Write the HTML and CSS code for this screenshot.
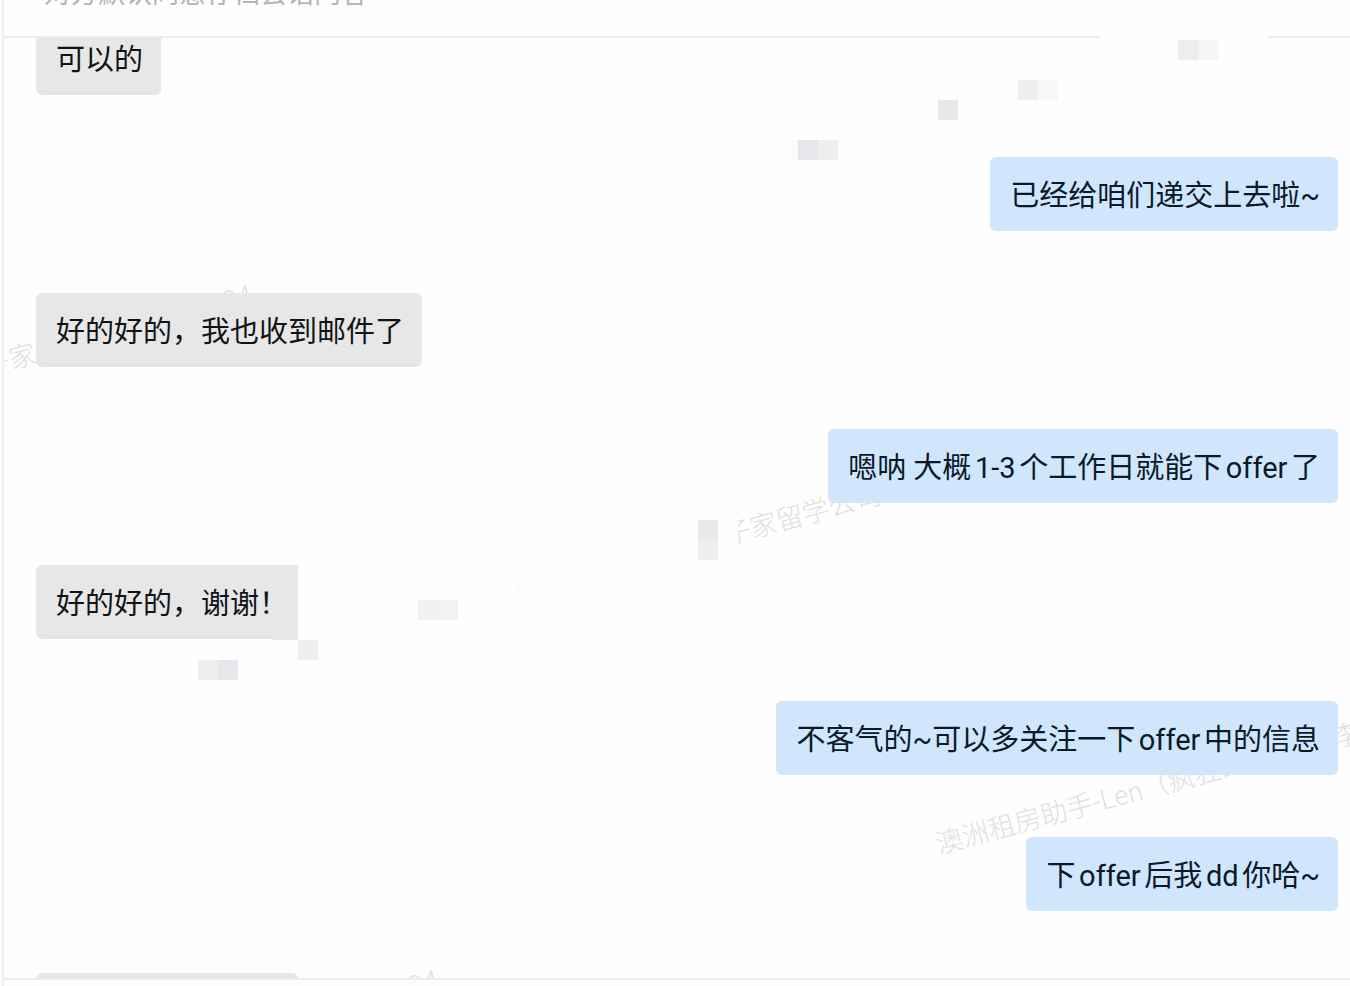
FILE: index.html
```html
<!DOCTYPE html>
<html lang="zh-CN">
<head>
  <meta charset="UTF-8">
  <meta name="viewport" content="width=device-width, initial-scale=1.0">
  <title>会话</title>
  <link rel="stylesheet" href="styles.css">
</head>
<body>
  <div class="chat">
    <header class="notice">
      <p>对方默认同意存档会话内容</p>
    </header>

    <main class="messages">
      <div class="bubble first">可以的</div>
      <div class="bubble mine">已经给咱们递交上去啦~</div>
      <div class="bubble">好的好的，我也收到邮件了</div>
      <div class="bubble mine">嗯呐 大概1-3个工作日就能下offer了</div>
      <div class="bubble">好的好的，谢谢！</div>
      <div class="bubble mine">不客气的~可以多关注一下offer中的信息</div>
      <div class="bubble mine">下offer后我dd你哈~</div>
      <div class="bubble next"></div>
    </main>
    <footer class="editor"></footer>
  </div>

  <!-- watermark, under the bubbles -->
  <svg class="watermark" width="1350" height="986" aria-hidden="true">
    <clipPath id="cut-home"><rect x="5" y="330" width="60" height="60"/></clipPath>
    <clipPath id="cut-study"><rect x="738" y="480" width="142" height="70"/></clipPath>
    <clipPath id="cut-name"><rect x="930" y="770" width="308" height="100"/></clipPath>
    <clipPath id="cut-bottom"><rect x="400" y="960" width="60" height="18"/></clipPath>
    <g clip-path="url(#cut-home)"><text transform="translate(-14 376) rotate(-15)">子家</text></g>
    <g clip-path="url(#cut-study)"><text transform="translate(727 545) rotate(-15)">子家留学公司</text></g>
    <g clip-path="url(#cut-name)"><text transform="translate(939 854) rotate(-15)">澳洲租房助手-Len（疯狂的</text></g>
    <text transform="translate(1336 748) rotate(-15)">李</text>
    <text transform="translate(225 311) rotate(-15)">24</text>
    <g clip-path="url(#cut-bottom)"><text transform="translate(411 996) rotate(-15)">24</text></g>
  </svg>

  <!-- mosaic, over the bubbles -->
  <svg class="mosaic" width="1350" height="986" aria-hidden="true">
    <rect x="1100" y="35" width="168" height="4" fill="#fefefe"/>
    <rect x="1178" y="40" width="20" height="20" fill="#ededee"/>
    <rect x="1198" y="40" width="20" height="20" fill="#f5f5f6"/>
    <rect x="1018" y="80" width="20" height="20" fill="#edeeee"/>
    <rect x="1038" y="80" width="20" height="20" fill="#f6f7f9"/>
    <rect x="938" y="100" width="20" height="20" fill="#e6e7e9"/>
    <rect x="778" y="140" width="20" height="20" fill="#fcfcfc"/>
    <rect x="798" y="140" width="20" height="20" fill="#e5e6e9"/>
    <rect x="818" y="140" width="20" height="20" fill="#eeeeef"/>
    <rect x="698" y="520" width="20" height="20" fill="#e7e8e8"/>
    <rect x="698" y="540" width="20" height="20" fill="#eeeef1"/>
    <rect x="622" y="540" width="18" height="20" fill="#fcfcfd"/>
    <rect x="516" y="577" width="20" height="20" fill="#fcfcfd"/>
    <rect x="418" y="600" width="20" height="20" fill="#f1f1f2"/>
    <rect x="438" y="600" width="20" height="20" fill="#f3f3f5"/>
    <rect x="298" y="560" width="20" height="80" fill="#fefefe"/>
    <rect x="273" y="634" width="25" height="6" fill="#e7e7e7"/>
    <rect x="298" y="640" width="20" height="20" fill="#eeeeef"/>
    <rect x="198" y="660" width="20" height="20" fill="#ecedef"/>
    <rect x="218" y="660" width="20" height="20" fill="#e5e7ea"/>
  </svg>
</body>
</html>
```

FILE: styles.css
```css
* {
  box-sizing: border-box;
}
body {
  margin: 0;
  background-color: #fefefe;
  color: #111417;
  font-family: Roboto, "Noto Sans CJK SC", sans-serif;
  font-size: 29px;
  overflow: hidden;
}
.chat {
  height: 100vh;
  margin-left: 2px;
  border-left: 2px solid #efeff0;
  display: flex;
  flex-direction: column;
}
.notice {
  height: 38px;
  flex-shrink: 0;
  padding: 0 40px 24px;
  border-bottom: 2px solid #ededed;
  display: flex;
  align-items: flex-end;
}
.notice p {
  margin: 0;
  font-size: 27px;
  line-height: 36px;
  color: #b4b4b4;
}
.messages {
  flex: 1;
  min-height: 0;
  overflow: hidden;
  padding: 0 12px 0 32px;
  display: flex;
  flex-direction: column;
  align-items: flex-start;
  gap: 62px;
}
.bubble {
  position: relative;
  z-index: 1;
  flex-shrink: 0;
  padding: 18px 18px 14px 20px;
  border-radius: 6px;
  background-color: #e7e7e7;
  line-height: 42px;
  text-autospace: normal;
}
.bubble.first {
  margin-top: -17px;
}
.bubble.mine {
  align-self: flex-end;
  background-color: #d0e6fd;
  color: #0b1a29;
}
.bubble.next {
  width: 262px;
  height: 74px;
}
.editor {
  height: 8px;
  flex-shrink: 0;
  border-top: 2px solid #ededed;
}
.watermark,
.mosaic {
  position: absolute;
  top: 0;
  left: 0;
  pointer-events: none;
}
.watermark {
  font-size: 27px;
  font-weight: 300;
  fill: #e0e0e0;
}
.mosaic {
  z-index: 2;
}
```
